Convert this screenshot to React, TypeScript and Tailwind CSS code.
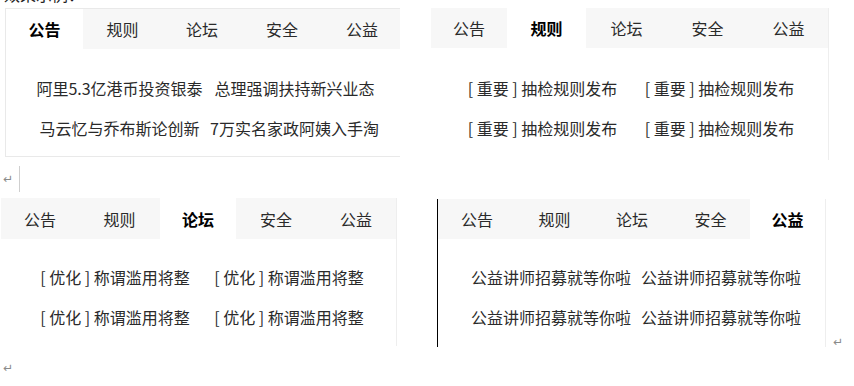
const tabs = ["公告", "规则", "论坛", "安全", "公益"];

type PanelProps = {
  active: number;
  widths: string[];
  items: string[];
  cols: string;
  frame: string;
  tabBar: string;
  body: string;
};

function Mark() {
  return <span className="text-[12px] leading-none text-[#8a8a8a] font-['DejaVu_Sans',sans-serif]">↵</span>;
}

function TabPanel({ active, widths, items, cols, frame, tabBar, body }: PanelProps) {
  return (
    <div className={`bg-white overflow-hidden shrink-0 ${frame}`}>
      <div className={`flex bg-[#f7f7f7] ${tabBar}`}>
        {tabs.map((t, i) => (
          <div
            key={t}
            className={`${widths[i]} shrink-0 flex items-center justify-center text-[16px] ${
              i === active ? "bg-white font-bold text-black" : "text-[#2a2a2a]"
            }`}
          >
            {t}
          </div>
        ))}
      </div>
      <div className={`grid ${cols} ${body}`}>
        {items.map((it, i) => (
          <div key={i} className="h-[40px] flex items-center justify-center whitespace-nowrap text-[16px] text-[#2a2a2a]">
            {it}
          </div>
        ))}
      </div>
    </div>
  );
}

export default function App() {
  const rule = "[ 重要 ] 抽检规则发布";
  const opt = "[ 优化 ] 称谓滥用将整";
  const gy = "公益讲师招募就等你啦";

  return (
    <div className="w-[854px] h-[386px] bg-white overflow-hidden font-['Noto_Sans_CJK_SC','Noto_Sans',sans-serif]">
      {/* bottom edge of the heading line above, cut by the screenshot */}
      <div className="h-[3px] overflow-hidden pl-[4px]">
        <div className="-mt-[14px] text-[16px] leading-[16px] text-[#222]">效果示例：</div>
      </div>

      <div className="flex items-start mt-[5px]">
        <TabPanel
          active={0}
          widths={["w-[77px]", "w-[79px]", "w-[80px]", "w-[80px]", "w-[80px]"]}
          items={["阿里5.3亿港币投资银泰", "总理强调扶持新兴业态", "马云忆与乔布斯论创新", "7万实名家政阿姨入手淘"]}
          cols="grid-cols-[175px_175px] pl-[26px]"
          frame="ml-[5px] w-[395px] h-[149px] border-l border-t border-b border-[#e9e9e9]"
          tabBar="h-[40px]"
          body="pt-[19px]"
        />
        <TabPanel
          active={1}
          widths={["w-[76px]", "w-[79px]", "w-[81px]", "w-[81px]", "w-[81px]"]}
          items={[rule, rule, rule, rule]}
          cols="grid-cols-[177px_177px] pl-[23px]"
          frame="ml-[31px] w-[398px] h-[152px] border-r border-[#eeeeee]"
          tabBar="h-[40px]"
          body="pt-[20px]"
        />
      </div>

      <div className="flex items-center h-[26px] mt-[6px]">
        <div className="w-[3px]" />
        <Mark />
        <div className="ml-[6px] w-px h-[26px] bg-[#cfcfcf]" />
      </div>

      <div className="flex items-start mt-[6px]">
        <TabPanel
          active={2}
          widths={["w-[78px]", "w-[81px]", "w-[76px]", "w-[80px]", "w-[80px]"]}
          items={[opt, opt, opt, opt]}
          cols="grid-cols-[174px_174px] pl-[27px]"
          frame="ml-[1px] w-[396px] h-[148px] border-r border-[#eeeeee]"
          tabBar="h-[41px]"
          body="pt-[18px]"
        />
        <div className="ml-[40px] mt-[1px] w-px h-[148px] bg-black shrink-0" />
        <TabPanel
          active={4}
          widths={["w-[78px]", "w-[77px]", "w-[78px]", "w-[79px]", "w-[75px]"]}
          items={[gy, gy, gy, gy]}
          cols="grid-cols-[170px_170px] pl-[28px]"
          frame="mt-[1px] w-[388px] h-[148px] border-r border-[#eeeeee]"
          tabBar="h-[40px]"
          body="pt-[18px]"
        />
        <div className="self-end ml-[7px] mb-[-1px] leading-none">
          <Mark />
        </div>
      </div>

      <div className="flex items-center h-[14px] mt-[14px] pl-[3px]">
        <Mark />
      </div>
    </div>
  );
}
